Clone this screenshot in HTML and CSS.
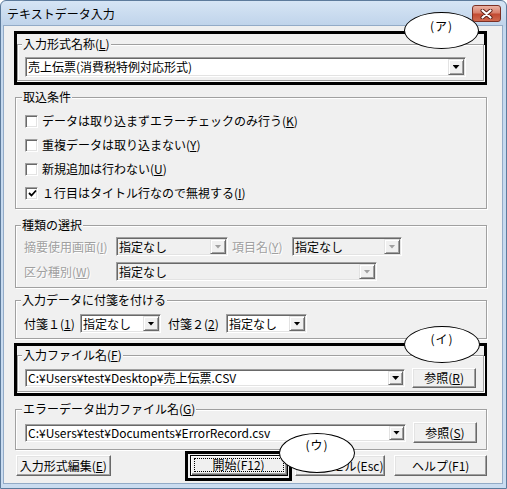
FILE: index.html
```html
<!DOCTYPE html>
<html lang="ja">
<head>
    <meta charset="UTF-8">
    <meta name="viewport" content="width=device-width, initial-scale=1.0">
    <title>テキストデータ入力</title>
    <link rel="stylesheet" href="styles.css">
</head>
<body>
    <div class="window">
        <div class="titlebar">
            <span class="title">テキストデータ入力</span>
            <span class="close-btn">
                <svg width="13" height="10" viewBox="0 0 13 10">
                    <path d="M2.5 1.5 L10.5 8.5 M10.5 1.5 L2.5 8.5" stroke="#5a1e14" stroke-width="4" stroke-linecap="round"/>
                    <path d="M2.5 1.5 L10.5 8.5 M10.5 1.5 L2.5 8.5" stroke="#ffffff" stroke-width="2.2" stroke-linecap="round"/>
                </svg>
            </span>
        </div>

        <div class="client">
            <div class="mark mark-format">
                <fieldset class="group group-format">
                    <legend>入力形式名称(<u>L</u>)</legend>
                    <div class="combo combo-format">
                        <span class="combo-text">売上伝票(消費税特例対応形式)</span>
                        <span class="drop"><i class="arrow"></i></span>
                    </div>
                </fieldset>
            </div>

            <fieldset class="group group-import">
                <legend>取込条件</legend>
                <div class="check-row"><span class="checkbox"></span>データは取り込まずエラーチェックのみ行う(<u>K</u>)</div>
                <div class="check-row"><span class="checkbox"></span>重複データは取り込まない(<u>Y</u>)</div>
                <div class="check-row"><span class="checkbox"></span>新規追加は行わない(<u>U</u>)</div>
                <div class="check-row">
                    <span class="checkbox">
                        <svg width="9" height="9" viewBox="0 0 9 9"><path d="M1 4 L3.5 6.5 L8 1.5" fill="none" stroke="#000" stroke-width="1.8"/></svg>
                    </span>１行目はタイトル行なので無視する(<u>I</u>)
                </div>
            </fieldset>

            <fieldset class="group group-kind">
                <legend>種類の選択</legend>
                <div class="field-row">
                    <span class="label disabled label-summary">摘要使用画面(<u>I</u>)</span>
                    <div class="combo disabled combo-summary">
                        <span class="combo-text">指定なし</span>
                        <span class="drop"><i class="arrow"></i></span>
                    </div>
                    <span class="label disabled label-item">項目名(<u>Y</u>)</span>
                    <div class="combo disabled combo-item">
                        <span class="combo-text">指定なし</span>
                        <span class="drop"><i class="arrow"></i></span>
                    </div>
                </div>
                <div class="field-row">
                    <span class="label disabled label-summary">区分種別(<u>W</u>)</span>
                    <div class="combo disabled combo-kind">
                        <span class="combo-text">指定なし</span>
                        <span class="drop"><i class="arrow"></i></span>
                    </div>
                </div>
            </fieldset>

            <fieldset class="group group-tag">
                <legend>入力データに付箋を付ける</legend>
                <div class="field-row">
                    <span class="label label-tag1">付箋１(<u>1</u>)</span>
                    <div class="combo combo-tag">
                        <span class="combo-text">指定なし</span>
                        <span class="drop"><i class="arrow"></i></span>
                    </div>
                    <span class="label label-tag2">付箋２(<u>2</u>)</span>
                    <div class="combo combo-tag">
                        <span class="combo-text">指定なし</span>
                        <span class="drop"><i class="arrow"></i></span>
                    </div>
                </div>
            </fieldset>

            <div class="mark mark-input">
                <fieldset class="group group-input">
                    <legend>入力ファイル名(<u>F</u>)</legend>
                    <div class="file-row">
                        <div class="combo combo-file">
                            <span class="combo-text">C:¥Users¥test¥Desktop¥売上伝票.CSV</span>
                            <span class="drop"><i class="arrow"></i></span>
                        </div>
                        <button class="btn btn-browse">参照(<u>R</u>)</button>
                    </div>
                </fieldset>
            </div>

            <fieldset class="group group-error">
                <legend>エラーデータ出力ファイル名(<u>G</u>)</legend>
                <div class="file-row">
                    <div class="combo combo-file">
                        <span class="combo-text">C:¥Users¥test¥Documents¥ErrorRecord.csv</span>
                        <span class="drop"><i class="arrow"></i></span>
                    </div>
                    <button class="btn btn-browse btn-tall">参照(<u>S</u>)</button>
                </div>
            </fieldset>

            <div class="actions">
                <button class="btn btn-edit">入力形式編集(<u>E</u>)</button>
                <div class="mark-start">
                    <button class="btn btn-default"><span class="focus">開始(F12)</span></button>
                </div>
                <button class="btn btn-cancel">キャンセル(Esc)</button>
                <button class="btn btn-help">ヘルプ(F1)</button>
            </div>

            <div class="note note-a">(ア)</div>
            <div class="note note-i">(イ)</div>
            <div class="note note-u">(ウ)</div>
        </div>
    </div>
</body>
</html>
```

FILE: styles.css
```css
* {
    box-sizing: border-box;
}
body {
    margin: 0;
    font-family: "Noto Sans CJK JP", "Noto Sans", sans-serif;
    font-size: 12px;
    line-height: 14px;
    color: #000000;
    background: #ffffff;
}

/* window frame */
.window {
    width: 507px;
    height: 489px;
    display: flex;
    flex-direction: column;
    padding: 0 4px 5px 3px;
    border: 1px solid #5d7b9c;
    border-radius: 6px 6px 0 0;
    background: linear-gradient(#d6e5f5, #bfd3ea 25px, #c4d8ee 26px, #cadcf0);
}
.titlebar {
    height: 25px;
    display: flex;
    align-items: flex-start;
}
.title {
    margin: 6px 0 0 3px;
}
.close-btn {
    width: 29px;
    height: 17px;
    margin: 4px 1px 0 auto;
    display: flex;
    align-items: center;
    justify-content: center;
    border: 1px solid #7c3024;
    border-radius: 3px;
    background: linear-gradient(#eab2a4, #d9806c 45%, #c24a32 55%, #cf6a50);
}
.client {
    position: relative;
    flex: 1;
    padding: 5px 15px 0 11px;
    background: #f0f0f0;
    box-shadow: 0 0 0 1px #93abc7;
}

/* group boxes */
.group {
    margin: 0;
    min-width: 0;
    padding: 5px 9px 3px;
    border: 1px solid #a0a0a0;
    box-shadow: inset 1px 1px #ffffff, 1px 1px #ffffff;
}
.group legend {
    margin-left: -3px;
    padding: 0 1px;
    background: #f0f0f0;
}
.mark {
    margin-left: -1px;
    border: 3px solid #000000;
    padding: 3px 0 1px;
}
.mark-input {
    margin-top: 4px;
    padding-top: 2px;
}
.group-format {
    padding: 6px 7px 3px;
}
.group-import {
    margin-top: 5px;
}
.group-kind {
    margin-top: 9px;
    padding: 5px 8px 6px;
}
.group-tag {
    margin-top: 5px;
    padding: 7px 8px 5px;
}
.group-input {
    padding: 6px 7px 3px;
}
.group-error {
    margin-top: 6px;
    padding: 6px 9px 6px;
}

/* checkboxes */
.check-row {
    height: 24px;
    display: flex;
    align-items: center;
    white-space: nowrap;
}
.checkbox {
    width: 13px;
    height: 13px;
    margin-right: 4px;
    display: flex;
    align-items: center;
    justify-content: center;
    background: #ffffff;
    border: 1px solid;
    border-color: #a0a0a0 #ffffff #ffffff #a0a0a0;
    box-shadow: inset 1px 1px #696969, inset -1px -1px #e3e3e3;
}
.checkbox svg {
    margin: 1px 0 0 1px;
}

/* labelled rows */
.field-row {
    height: 19px;
    display: flex;
    align-items: center;
    white-space: nowrap;
}
.field-row + .field-row {
    margin-top: 6px;
}
.label.disabled {
    color: #a0a0a0;
    text-shadow: 1px 1px #ffffff;
}
.label-summary {
    width: 92px;
}
.label-item {
    width: 60px;
    margin-left: 4px;
}
.label-tag1 {
    width: 56px;
}
.label-tag2 {
    width: 58px;
    margin-left: 7px;
}

/* combo boxes */
.combo {
    height: 20px;
    display: flex;
    align-items: stretch;
    padding: 1px;
    background: #ffffff;
    border: 1px solid;
    border-color: #a0a0a0 #ffffff #ffffff #a0a0a0;
    box-shadow: inset 1px 1px #696969, inset -1px -1px #e3e3e3;
}
.combo.disabled {
    background: #f0f0f0;
}
.combo-text {
    flex: 1;
    min-width: 0;
    padding-left: 1px;
    display: flex;
    align-items: center;
    white-space: nowrap;
}
.drop {
    width: 16px;
    flex: none;
    display: flex;
    align-items: center;
    justify-content: center;
    background: #f0f0f0;
    border: 1px solid;
    border-color: #e3e3e3 #696969 #696969 #e3e3e3;
    box-shadow: inset 1px 1px #ffffff, inset -1px -1px #a0a0a0;
}
.arrow {
    width: 7px;
    height: 4px;
    background: #000000;
    clip-path: polygon(0 0, 100% 0, 50% 100%);
}
.combo.disabled .arrow {
    background: #a0a0a0;
}
.combo-format {
    width: 441px;
}
.combo-summary {
    width: 112px;
    height: 19px;
}
.combo-item {
    width: 110px;
    height: 19px;
}
.combo-kind {
    width: 261px;
    height: 19px;
}
.combo-tag {
    width: 81px;
    height: 19px;
}
.combo-file {
    width: 381px;
    height: 18px;
}
.combo-file .drop {
    width: 15px;
}

/* buttons */
.file-row {
    height: 20px;
    display: flex;
    align-items: center;
}
.group-error .file-row {
    height: 21px;
}
.btn {
    height: 21px;
    padding: 0;
    display: flex;
    align-items: center;
    justify-content: center;
    font: inherit;
    color: #000000;
    white-space: nowrap;
    background: #f0f0f0;
    border: 1px solid;
    border-color: #ffffff #696969 #696969 #ffffff;
    box-shadow: inset -1px -1px #a0a0a0, inset 1px 1px #e3e3e3;
}
.btn-browse {
    width: 64px;
    height: 20px;
    margin-left: 7px;
}
.btn-browse.btn-tall {
    height: 21px;
}
.actions {
    margin-top: 5px;
    padding-left: 1px;
    display: flex;
    align-items: flex-start;
}
.btn-edit {
    width: 96px;
}
.mark-start {
    margin: -4px 0 0 74px;
    padding: 1px 1px 2px 2px;
    border: 3px solid #000000;
}
.btn-default {
    width: 98px;
    align-items: stretch;
    border-color: #000000;
    box-shadow: inset 1px 1px #ffffff, inset -1px -1px #696969, inset -2px -2px #a0a0a0;
}
.focus {
    flex: 1;
    margin: 2px 3px 3px 3px;
    display: flex;
    align-items: center;
    justify-content: center;
    border: 1px dotted #000000;
}
.btn-cancel {
    width: 92px;
    margin-left: 3px;
}
.btn-help {
    width: 94px;
    margin-left: 9px;
}

/* annotation callouts */
.note {
    position: absolute;
    z-index: 2;
    width: 75px;
    height: 37px;
    padding-top: 6px;
    text-align: center;
    letter-spacing: 1px;
    background: #ffffff;
    border: 1px solid #000000;
    border-radius: 50%;
}
.note-a {
    left: 400px;
    top: -14px;
}
.note-i {
    left: 400px;
    top: 300px;
    width: 76px;
    padding-top: 5px;
}
.note-u {
    left: 275px;
    top: 407px;
    width: 76px;
    height: 40px;
    padding-top: 4px;
}
```
